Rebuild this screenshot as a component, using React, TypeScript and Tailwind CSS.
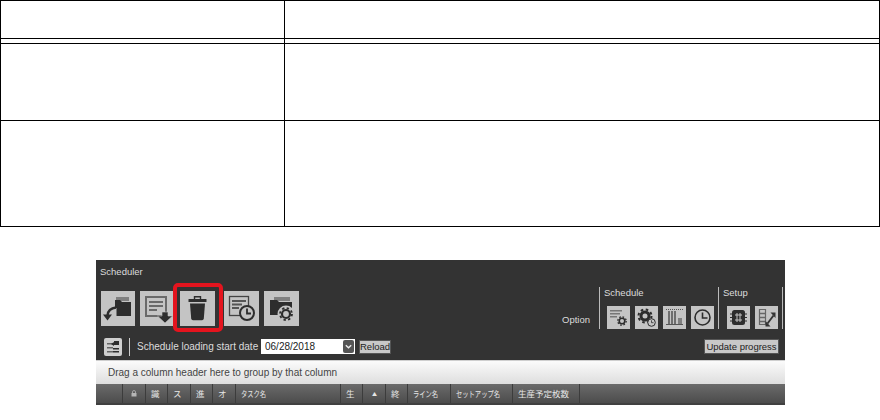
const cols = [
  { label: '', w: 'w-[27px]' },
  { label: 'lock', w: 'w-[23px]' },
  { label: '識', w: 'w-[22px]' },
  { label: 'ス', w: 'w-[23px]' },
  { label: '進', w: 'w-[22px]' },
  { label: 'オ', w: 'w-[23px]' },
  { label: 'タスク名', w: 'w-[105px]', squeeze: true },
  { label: '生', w: 'w-[22px]' },
  { label: '▲', w: 'w-[23px]', small: true },
  { label: '終', w: 'w-[22px]' },
  { label: 'ライン名', w: 'w-[43px]', squeeze: true },
  { label: 'セットアップ名', w: 'w-[62px]', squeeze: true },
  { label: '生産予定枚数', w: 'w-[67px]' },
];

const box = 'flex items-center justify-center bg-[#c4c4c4]';

function FolderBack() {
  return (
    <svg viewBox="0 0 34 35" className="w-[34px] h-[35px]">
      <path d="M15 6h13v4H15z" fill="#808080" />
      <path d="M14 9h5l2 2h9v14H15.500v-8H14z" fill="#2d2d2d" />
      <path d="M15 16.500c-5 .5-8 3-8.500 8" fill="none" stroke="#2d2d2d" strokeWidth="2.400" />
      <path d="M2 23.500h9l-4.500 6z" fill="#2d2d2d" />
    </svg>
  );
}

function ListDown() {
  return (
    <svg viewBox="0 0 34 35" className="w-[34px] h-[35px]">
      <rect x="6" y="6" width="20" height="19" fill="none" stroke="#6a6a6a" strokeWidth="2" />
      <path d="M9 10h14v2H9zM9 14h14v2H9zM9 18h8v2H9z" fill="#6a6a6a" />
      <path d="M22 21h6v4h4.500l-7.500 7-7.500-7H22z" fill="#2d2d2d" stroke="#c4c4c4" strokeWidth=".6" />
    </svg>
  );
}

function Trash() {
  return (
    <svg viewBox="0 0 35 35" className="w-[35px] h-[35px]">
      <path d="M14.500 8V5.700h6V8" fill="none" stroke="#2d2d2d" strokeWidth="1.400" />
      <path d="M9 8h17q.5 0 .5 .5V11H8.500V8.500q0-.5 .5-.5z" fill="#2d2d2d" />
      <path d="M10 12.500h15l-1.200 15q-.2 1.700-1.800 1.700h-9q-1.600 0-1.800-1.700z" fill="#2d2d2d" />
    </svg>
  );
}

function ListClock() {
  return (
    <svg viewBox="0 0 35 35" className="w-[35px] h-[35px]">
      <rect x="5.500" y="5.500" width="19" height="19" fill="none" stroke="#444" strokeWidth="1.300" />
      <path d="M8 9h14v2H8zM8 12.500h10v2H8zM8 16h7v2H8z" fill="#555" />
      <circle cx="23" cy="22" r="7" fill="#c4c4c4" stroke="#2d2d2d" strokeWidth="2" />
      <path d="M23 17.500V22.500h4" fill="none" stroke="#2d2d2d" strokeWidth="1.800" />
    </svg>
  );
}

function FolderGear() {
  return (
    <svg viewBox="0 0 35 35" className="w-[35px] h-[35px]">
      <path d="M10 6h16v4H10z" fill="#808080" />
      <path d="M6 9h7l2 2h13v13H6z" fill="#2d2d2d" />
      <circle cx="22" cy="23" r="8.500" fill="#c4c4c4" />
      <circle cx="22" cy="23" r="4" fill="none" stroke="#2d2d2d" strokeWidth="2.200" />
      <circle cx="22" cy="23" r="6" fill="none" stroke="#2d2d2d" strokeWidth="1.800" strokeDasharray="2.350 2.360" />
    </svg>
  );
}

function ListGear() {
  return (
    <svg viewBox="0 0 23 23" className="w-[23px] h-[23px]">
      <path d="M3 4h12v1.600H3zM3 7h10v1.600H3zM3 10h7v1.600H3z" fill="#777" />
      <circle cx="15" cy="15" r="2.800" fill="none" stroke="#2d2d2d" strokeWidth="1.600" />
      <circle cx="15" cy="15" r="4.200" fill="none" stroke="#2d2d2d" strokeWidth="1.300" strokeDasharray="1.650 1.650" />
    </svg>
  );
}

function GearClock() {
  return (
    <svg viewBox="0 0 23 23" className="w-[23px] h-[23px]">
      <circle cx="10" cy="10" r="4" fill="none" stroke="#2d2d2d" strokeWidth="3" />
      <circle cx="10" cy="10" r="6.500" fill="none" stroke="#2d2d2d" strokeWidth="2" strokeDasharray="2.550 2.550" />
      <circle cx="16.500" cy="16.500" r="3.800" fill="#c4c4c4" stroke="#2d2d2d" strokeWidth="1" />
      <path d="M16.500 14.300v2.400h2" fill="none" stroke="#2d2d2d" strokeWidth=".8" />
    </svg>
  );
}

function Bars() {
  return (
    <svg viewBox="0 0 23 23" className="w-[23px] h-[23px]">
      <path d="M3 3.500h17" stroke="#555" strokeWidth="1" strokeDasharray="1 1" />
      <path d="M5 5h2v13H5zM8 5h2v13H8zM11 5h2v13h-2z" fill="#6e6e6e" />
      <path d="M15 12h4v6h-4z" fill="#808080" />
      <path d="M3 18.500h17" stroke="#555" strokeWidth="1" />
    </svg>
  );
}

function Clock() {
  return (
    <svg viewBox="0 0 23 23" className="w-[23px] h-[23px]">
      <circle cx="11.500" cy="11.500" r="7.500" fill="none" stroke="#2d2d2d" strokeWidth="1.600" />
      <path d="M11.500 6.500v5.500h5" fill="none" stroke="#2d2d2d" strokeWidth="1.600" />
    </svg>
  );
}

function Chip() {
  return (
    <svg viewBox="0 0 23 23" className="w-[23px] h-[23px]">
      <rect x="5" y="4" width="13" height="15" rx="2.500" fill="#2d2d2d" />
      <path d="M8 9h7M8 14h7M10 7v9M13 7v9" stroke="#c4c4c4" strokeWidth="1" />
      <path d="M3 8h3M3 11.500h3M3 15h3M17 8h3M17 11.500h3M17 15h3" stroke="#2d2d2d" strokeWidth="1.100" />
    </svg>
  );
}

function Swap() {
  return (
    <svg viewBox="0 0 23 23" className="w-[23px] h-[23px]">
      <path d="M4.500 3.500h6v15h-6z" fill="none" stroke="#666" strokeWidth="1.200" />
      <path d="M4 7.500h7M4 11.500h7M4 15.500h7" stroke="#666" strokeWidth="1.500" />
      <path d="M12.500 17.500l6-8" stroke="#333" strokeWidth="1.800" />
      <path d="M15.500 6.500h5v5.500zM10.500 15v5.500h5z" fill="#333" />
    </svg>
  );
}

function SmallList() {
  return (
    <svg viewBox="0 0 18 18" className="w-[18px] h-[18px]">
      <path d="M3 5h6v1.400H3zM3 9h6v1.400H3zM3 13h6v1.400H3z" fill="#666" />
      <path d="M10 3h5v4h-5zM7 6l3-2v4zM9 10h6v1.400H9zM9 13h6v1.400H9z" fill="#2d2d2d" />
    </svg>
  );
}

function Lock() {
  return (
    <svg viewBox="0 0 6 7" className="w-[6px] h-[7px]">
      <path d="M1.500 3V2a1.500 1.500 0 0 1 3 0v1" fill="none" stroke="#b5b5b5" strokeWidth=".8" />
      <path d="M.5 3h5v3.500h-5z" fill="#b5b5b5" />
    </svg>
  );
}

function BigButton({ children, w = 'w-[35px]' }: { children: React.ReactNode; w?: string }) {
  return <div className={`${box} ${w} h-[35px]`}>{children}</div>;
}

function SmallButton({ children }: { children: React.ReactNode }) {
  return <div className={`${box} w-[23px] h-[23px]`}>{children}</div>;
}

export default function App() {
  return (
    <div className="w-[880px] h-[420px] overflow-hidden bg-white font-['Liberation_Sans',sans-serif]">
      {/* empty ruled table */}
      <div className="w-full border-x border-black">
        <div className="grid grid-cols-[284px_1fr] h-[39px] border-y border-black">
          <div className="border-r border-black" />
          <div />
        </div>
        <div className="grid grid-cols-[284px_1fr] h-[5px] border-b border-black">
          <div className="border-r border-black" />
          <div />
        </div>
        <div className="grid grid-cols-[284px_1fr] h-[77px] border-b border-black">
          <div className="border-r border-black" />
          <div />
        </div>
        <div className="grid grid-cols-[284px_1fr] h-[106px] border-b border-black">
          <div className="border-r border-black" />
          <div />
        </div>
      </div>

      {/* scheduler screen */}
      <div className="relative ml-[96px] mt-[33px] w-[689px] h-[145px] bg-[#333333] flex flex-col text-[#dcdcdc]">
        <div className="h-[22px] pl-[4px] pt-[6px] text-[9.500px] leading-[12px]">Scheduler</div>

        <div className="flex h-[47px]">
          <div className="flex items-start pl-[5px] pt-[9px] w-[214px]">
            <BigButton w="w-[34px]"><FolderBack /></BigButton>
            <div className="ml-[5px]"><BigButton w="w-[34px]"><ListDown /></BigButton></div>
            <div className="ml-[6px]"><BigButton><Trash /></BigButton></div>
            <div className="ml-[9px] flex gap-[5px]">
              <BigButton><ListClock /></BigButton>
              <BigButton><FolderGear /></BigButton>
            </div>
          </div>
          <div className="flex-1 flex justify-end pr-[2px] pt-[5px]">
            <div className="self-end pb-[3px] pr-[9px] text-[9.500px] leading-[12px]">Option</div>
            <div className="border-l border-[#bbbbbb] h-[42px] w-[119px] pl-[4px]">
              <div className="text-[9.500px] leading-[12px]">Schedule</div>
              <div className="flex gap-[5px] mt-[7px] ml-[3px]">
                <SmallButton><ListGear /></SmallButton>
                <SmallButton><GearClock /></SmallButton>
                <SmallButton><Bars /></SmallButton>
                <SmallButton><Clock /></SmallButton>
              </div>
            </div>
            <div className="border-x border-[#bbbbbb] h-[42px] w-[65px] pl-[4px]">
              <div className="text-[9.500px] leading-[12px]">Setup</div>
              <div className="flex gap-[5px] mt-[7px] ml-[4px]">
                <SmallButton><Chip /></SmallButton>
                <SmallButton><Swap /></SmallButton>
              </div>
            </div>
          </div>
        </div>

        <div className="flex items-center h-[31px] pt-[4px] pl-[8px] pr-[6px]">
          <div className={`${box} w-[18px] h-[18px] rounded-[2px] bg-[#cfcfcf]`}><SmallList /></div>
          <div className="ml-[7px] h-[18px] border-l border-[#cccccc]" />
          <span className="ml-[7px] w-[123px] text-[10px] whitespace-nowrap">Schedule loading start date</span>
          <div className="ml-px flex items-center w-[94px] h-[15px] bg-white text-[#222] text-[10px] pl-[4px]">
            <span className="flex-1">06/28/2018</span>
            <div className="w-[11px] h-[13px] mr-px rounded-[2px] bg-[#555] flex items-center justify-center">
              <svg viewBox="0 0 10 10" className="w-[9px] h-[9px]">
                <path d="M2 3.500l3 3 3-3" fill="none" stroke="#eee" strokeWidth="1.500" />
              </svg>
            </div>
          </div>
          <div className="ml-[4px] w-[32px] h-[14px] bg-[#c8c8c8] border border-[#555] text-[#222] text-[9.500px] leading-[12px] text-center">Reload</div>
          <div className="ml-auto w-[75px] h-[15px] bg-[#c8c8c8] border border-[#555] text-[#222] text-[9.500px] leading-[13px] text-center whitespace-nowrap">Update progress</div>
        </div>

        <div className="h-[24px] shrink-0 border-t border-[#cfcfcf] bg-gradient-to-b from-[#fbfbfb] to-[#dedede] text-[#444] text-[10px] flex items-center pl-[12px]">
          Drag a column header here to group by that column
        </div>

        <div className="flex-1 bg-gradient-to-b from-[#6b6b6b] to-[#4c4c4c] border-b-2 border-[#404040] flex">
          {cols.map((c, i) => (
            <div
              key={i}
              className={`${c.w} shrink-0 border-r border-[#3c3c3c] flex items-center justify-start pl-[5px] text-[#e6e6e6] font-['Noto_Sans_CJK_JP',sans-serif] whitespace-nowrap ${c.small ? 'text-[5px] pl-[9px]' : 'text-[8.500px]'}`}
            >
              {c.label === 'lock' ? (
                <span className="pl-[3px]"><Lock /></span>
              ) : c.squeeze ? (
                <span className="inline-block origin-left scale-x-[0.74]">{c.label}</span>
              ) : (
                c.label
              )}
            </div>
          ))}
        </div>

        {/* red highlight round the delete button */}
        <div className="absolute left-[77px] top-[23px] w-[50px] h-[49px] rounded-[5px] border-[4px] border-[#e4141e]" />
      </div>
    </div>
  );
}
